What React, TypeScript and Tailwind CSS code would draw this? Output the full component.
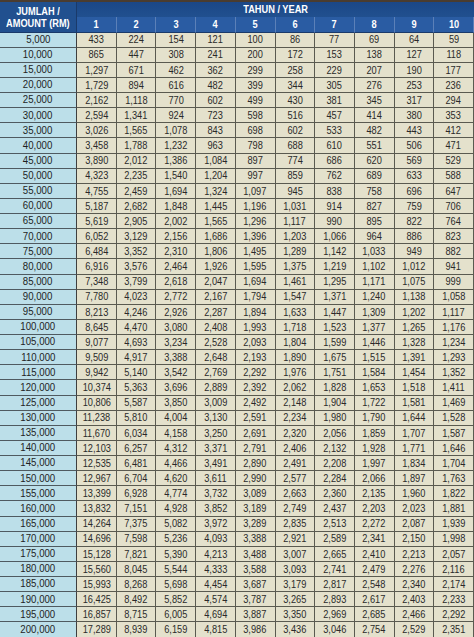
import React from "react";

const raw = `5,000|433 224 154 121 100 86 77 69 64 59
10,000|865 447 308 241 200 172 153 138 127 118
15,000|1,297 671 462 362 299 258 229 207 190 177
20,000|1,729 894 616 482 399 344 305 276 253 236
25,000|2,162 1,118 770 602 499 430 381 345 317 294
30,000|2,594 1,341 924 723 598 516 457 414 380 353
35,000|3,026 1,565 1,078 843 698 602 533 482 443 412
40,000|3,458 1,788 1,232 963 798 688 610 551 506 471
45,000|3,890 2,012 1,386 1,084 897 774 686 620 569 529
50,000|4,323 2,235 1,540 1,204 997 859 762 689 633 588
55,000|4,755 2,459 1,694 1,324 1,097 945 838 758 696 647
60,000|5,187 2,682 1,848 1,445 1,196 1,031 914 827 759 706
65,000|5,619 2,905 2,002 1,565 1,296 1,117 990 895 822 764
70,000|6,052 3,129 2,156 1,686 1,396 1,203 1,066 964 886 823
75,000|6,484 3,352 2,310 1,806 1,495 1,289 1,142 1,033 949 882
80,000|6,916 3,576 2,464 1,926 1,595 1,375 1,219 1,102 1,012 941
85,000|7,348 3,799 2,618 2,047 1,694 1,461 1,295 1,171 1,075 999
90,000|7,780 4,023 2,772 2,167 1,794 1,547 1,371 1,240 1,138 1,058
95,000|8,213 4,246 2,926 2,287 1,894 1,633 1,447 1,309 1,202 1,117
100,000|8,645 4,470 3,080 2,408 1,993 1,718 1,523 1,377 1,265 1,176
105,000|9,077 4,693 3,234 2,528 2,093 1,804 1,599 1,446 1,328 1,234
110,000|9,509 4,917 3,388 2,648 2,193 1,890 1,675 1,515 1,391 1,293
115,000|9,942 5,140 3,542 2,769 2,292 1,976 1,751 1,584 1,454 1,352
120,000|10,374 5,363 3,696 2,889 2,392 2,062 1,828 1,653 1,518 1,411
125,000|10,806 5,587 3,850 3,009 2,492 2,148 1,904 1,722 1,581 1,469
130,000|11,238 5,810 4,004 3,130 2,591 2,234 1,980 1,790 1,644 1,528
135,000|11,670 6,034 4,158 3,250 2,691 2,320 2,056 1,859 1,707 1,587
140,000|12,103 6,257 4,312 3,371 2,791 2,406 2,132 1,928 1,771 1,646
145,000|12,535 6,481 4,466 3,491 2,890 2,491 2,208 1,997 1,834 1,704
150,000|12,967 6,704 4,620 3,611 2,990 2,577 2,284 2,066 1,897 1,763
155,000|13,399 6,928 4,774 3,732 3,089 2,663 2,360 2,135 1,960 1,822
160,000|13,832 7,151 4,928 3,852 3,189 2,749 2,437 2,203 2,023 1,881
165,000|14,264 7,375 5,082 3,972 3,289 2,835 2,513 2,272 2,087 1,939
170,000|14,696 7,598 5,236 4,093 3,388 2,921 2,589 2,341 2,150 1,998
175,000|15,128 7,821 5,390 4,213 3,488 3,007 2,665 2,410 2,213 2,057
180,000|15,560 8,045 5,544 4,333 3,588 3,093 2,741 2,479 2,276 2,116
185,000|15,993 8,268 5,698 4,454 3,687 3,179 2,817 2,548 2,340 2,174
190,000|16,425 8,492 5,852 4,574 3,787 3,265 2,893 2,617 2,403 2,233
195,000|16,857 8,715 6,005 4,694 3,887 3,350 2,969 2,685 2,466 2,292
200,000|17,289 8,939 6,159 4,815 3,986 3,436 3,046 2,754 2,529 2,351`;

const rows = raw.split("\n").map((l) => {
  const [amt, vals] = l.split("|");
  return { amt, vals: vals.split(" ") };
});

const years = ["1", "2", "3", "4", "5", "6", "7", "8", "9", "10"];

function N({ children }: { children: React.ReactNode }) {
  return <span className="inline-block whitespace-nowrap scale-x-[0.84]">{children}</span>;
}

export default function App() {
  return (
    <div
      className="w-[474px] h-[637px] overflow-hidden bg-[#e4e1cc]"
      style={{ fontFamily: '"Liberation Sans", Arial, sans-serif' }}
    >
      <div className="grid grid-cols-[77px_repeat(10,minmax(0,1fr))] border-t-2 border-[#4a3c30]">
        {/* header */}
        <div className="row-span-2 bg-[#21508f] text-white font-bold text-[11px] leading-[12px] flex flex-col items-center justify-center border-r border-b border-[#1a3a6a]">
          <N>JUMLAH /</N>
          <N>AMOUNT (RM)</N>
        </div>
        <div className="col-span-10 h-[15px] bg-gradient-to-b from-[#1b4787] to-[#21508f] text-white font-bold text-[11px] flex items-center justify-center">
          <N>TAHUN / YEAR</N>
        </div>
        {years.map((y) => (
          <div
            key={y}
            className="h-[15.5px] bg-[#2a5ca3] text-white font-bold text-[11px] flex items-center justify-center border-r border-[#5b80b8] border-b border-b-[#1a3a6a]"
          >
            <N>{y}</N>
          </div>
        ))}
        {rows.map((r) => (
          <React.Fragment key={r.amt}>
            <div className="h-[15.125px] bg-[#bcdfe9] text-[#1e1e1e] text-[11.5px] flex items-center justify-center border-r border-r-[#3e3e3e] border-b border-b-[#4f5a60]">
              <N>{r.amt}</N>
            </div>
            {r.vals.map((v, i) => (
              <div
                key={i}
                className="h-[15.125px] bg-[#e4e1cc] text-[#2a2a2a] text-[11px] flex items-center justify-center border-r border-b border-[#5a5a50]"
              >
                <N>{v}</N>
              </div>
            ))}
          </React.Fragment>
        ))}
      </div>
    </div>
  );
}
